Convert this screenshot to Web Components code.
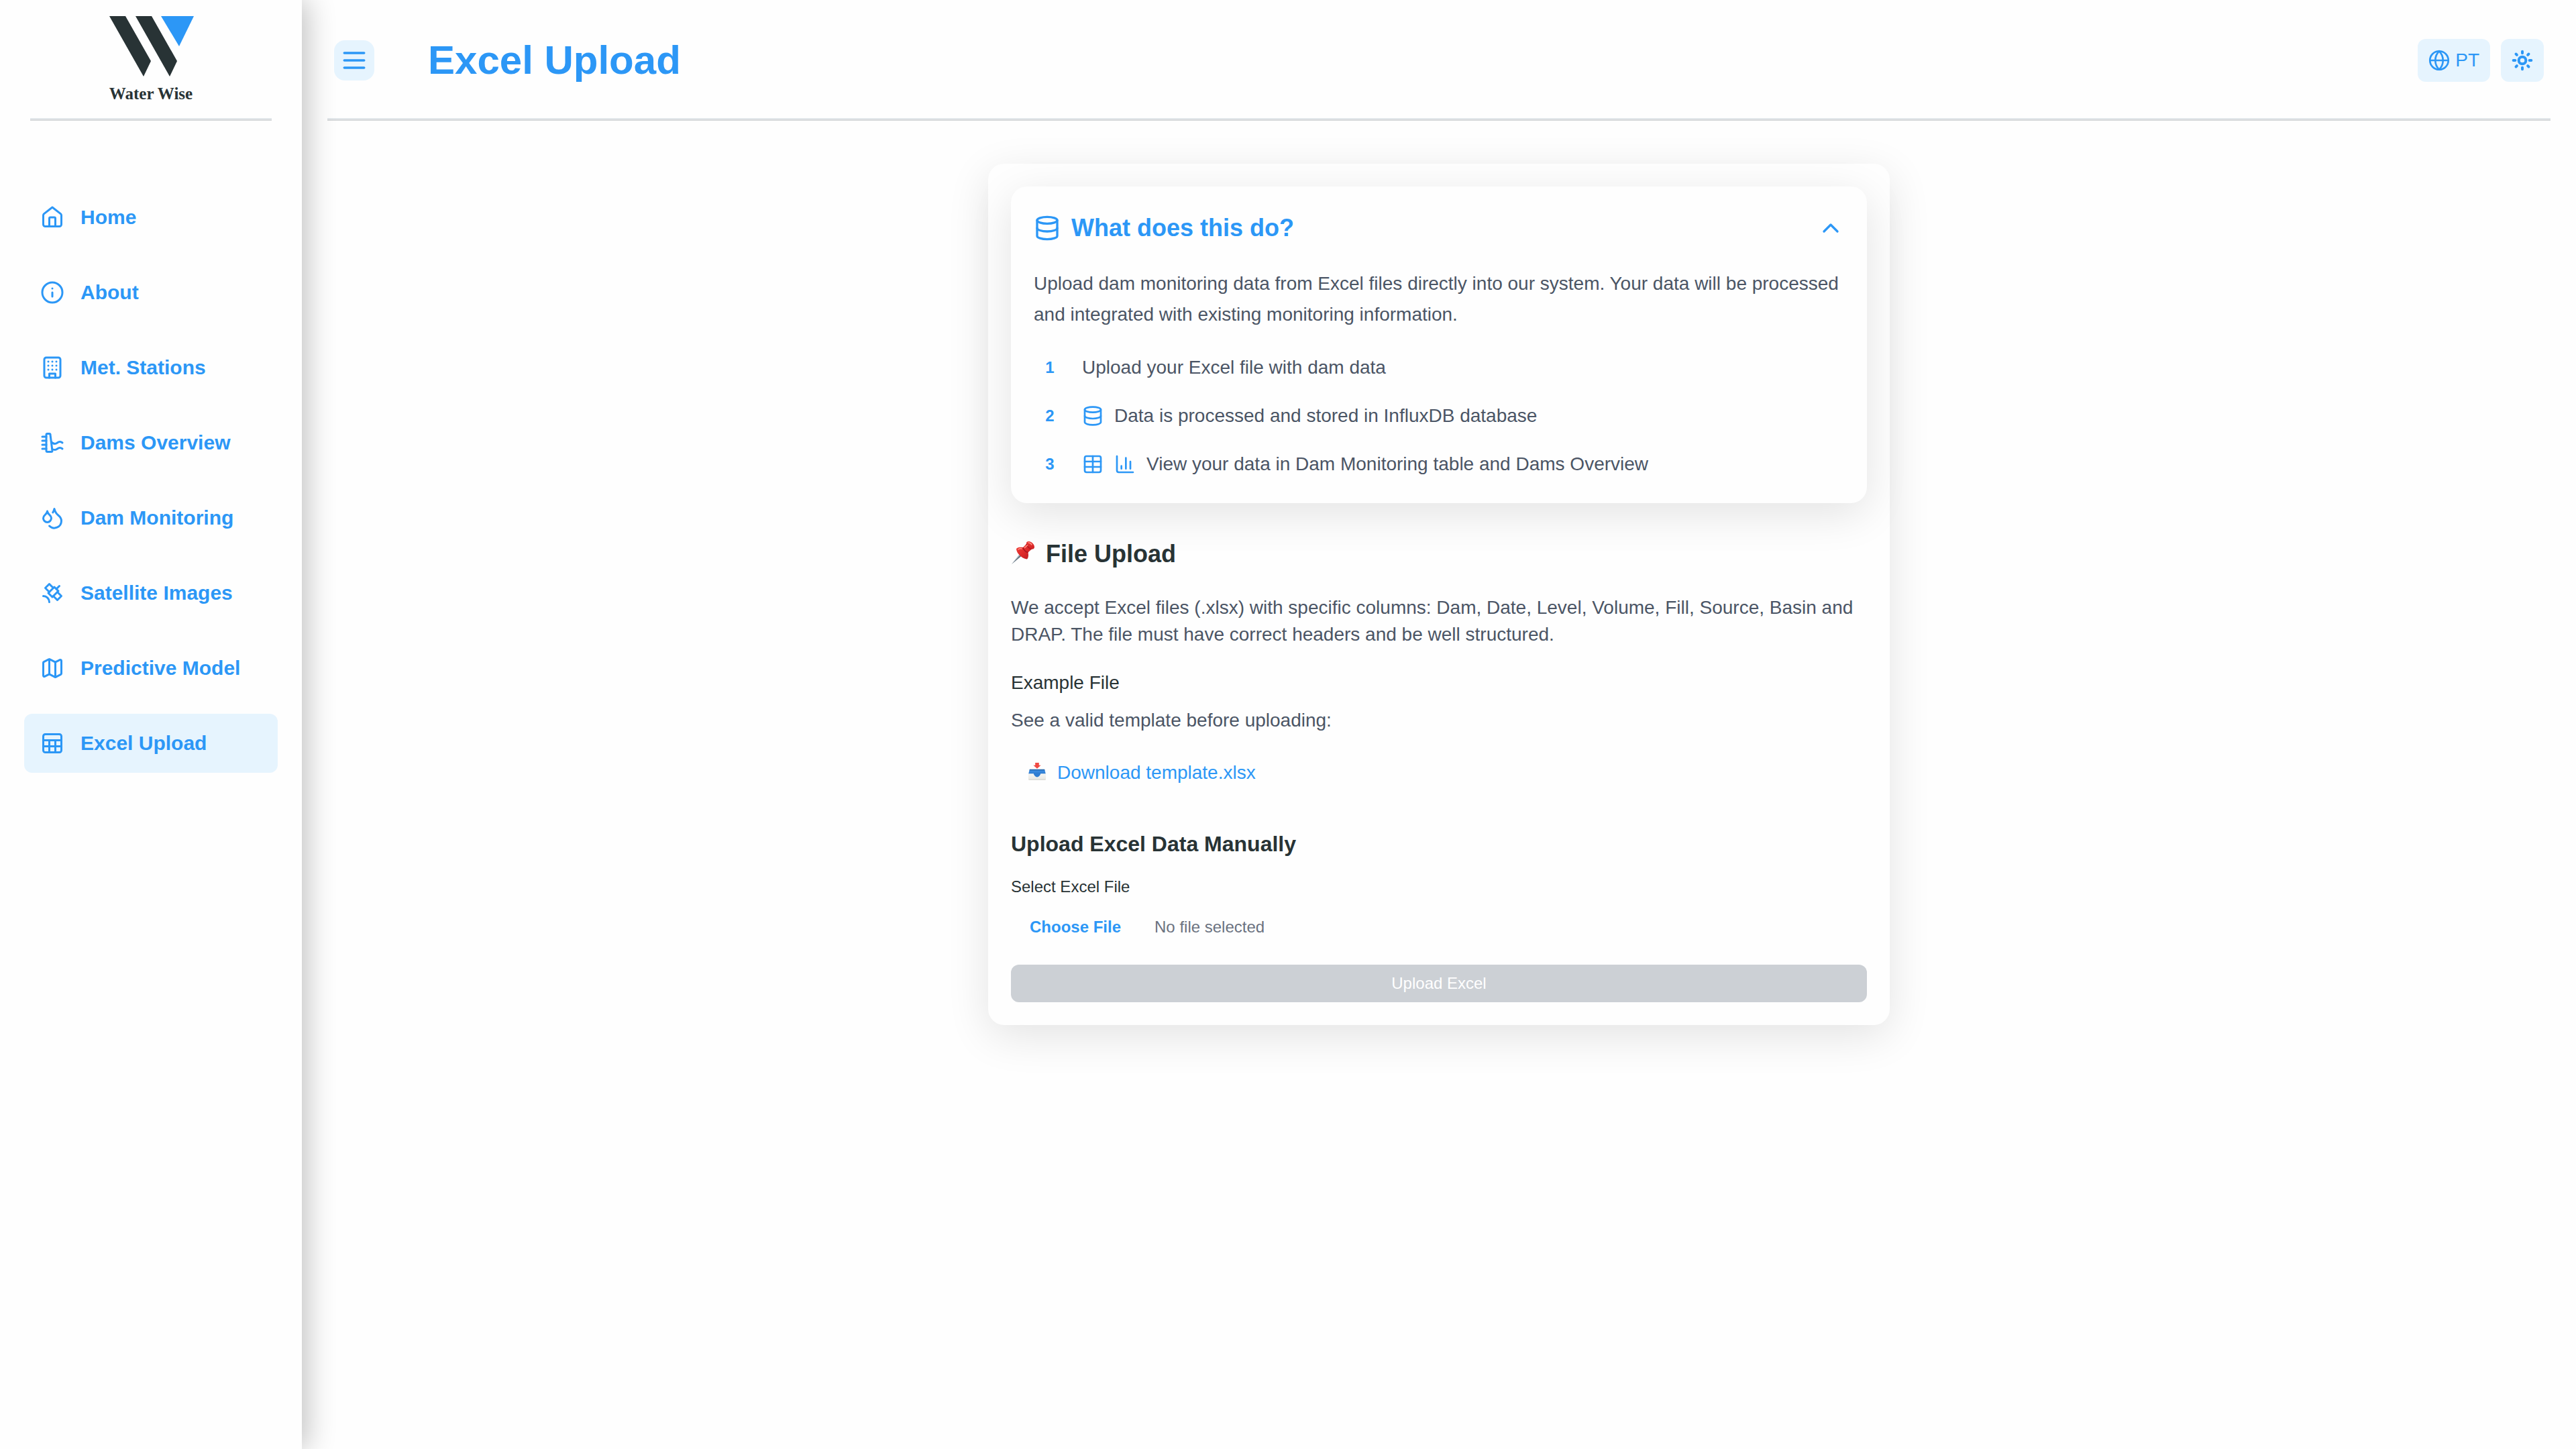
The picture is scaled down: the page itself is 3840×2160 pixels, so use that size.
<!DOCTYPE html>
<html lang="en">
<head>
<meta charset="utf-8">
<meta name="viewport" content="width=device-width, initial-scale=1">
<title>Water Wise - Excel Upload</title>
<style>
  :root {
    --primary: #2c97f6;
    --primary-soft: #e6f4fe;
    --ink: #283335;
    --body: #4b5565;
    --muted: #6b7280;
    --surface: #fefefe;
    --rule-top: #e2e7ea;
    --rule-bottom: #d6d8da;
    --card-shadow: 0 16px 64px rgba(0, 0, 0, .11);
  }
  body {
    margin: 0;
    background: var(--surface);
    color: var(--ink);
    font-family: "Liberation Sans", Arial, Helvetica, sans-serif;
    font-size: 28px;
    line-height: 40px;
  }
</style>
</head>
<body>
<ww-app>
  <ww-sidebar slot="sidebar">
    <ww-nav-link icon="house" href="#home">Home</ww-nav-link>
    <ww-nav-link icon="info" href="#about">About</ww-nav-link>
    <ww-nav-link icon="building" href="#stations">Met. Stations</ww-nav-link>
    <ww-nav-link icon="dam" href="#dams">Dams Overview</ww-nav-link>
    <ww-nav-link icon="droplets" href="#monitoring">Dam Monitoring</ww-nav-link>
    <ww-nav-link icon="satellite" href="#satellite">Satellite Images</ww-nav-link>
    <ww-nav-link icon="map" href="#model">Predictive Model</ww-nav-link>
    <ww-nav-link icon="sheet" href="#upload" active>Excel Upload</ww-nav-link>
  </ww-sidebar>
  <ww-header slot="header">Excel Upload</ww-header>
  <ww-card>
    <ww-info-card>
      <span slot="title">What does this do?</span>
      <span slot="intro">Upload dam monitoring data from Excel files directly into our system. Your data will be processed and integrated with existing monitoring information.</span>
      <ww-step number="1">Upload your Excel file with dam data</ww-step>
      <ww-step number="2" icons="database">Data is processed and stored in InfluxDB database</ww-step>
      <ww-step number="3" icons="table chart">View your data in Dam Monitoring table and Dams Overview</ww-step>
    </ww-info-card>
    <ww-file-guide></ww-file-guide>
    <ww-upload-form></ww-upload-form>
  </ww-card>
</ww-app>

<script>
const ICONS = {
  house: '<path d="M15 21v-8a1 1 0 0 0-1-1h-4a1 1 0 0 0-1 1v8"/><path d="M3 10a2 2 0 0 1 .6-1.4L12 2l8.4 6.6A2 2 0 0 1 21 10v9a2 2 0 0 1-2 2H5a2 2 0 0 1-2-2z"/>',
  info: '<circle cx="12" cy="12" r="10"/><path d="M12 16v-4"/><path d="M12 8h.01"/>',
  building: '<rect width="16" height="20" x="4" y="2" rx="2"/><path d="M9 22v-4h6v4"/><path d="M8 6h.01M16 6h.01M12 6h.01M12 10h.01M12 14h.01M16 10h.01M16 14h.01M8 10h.01M8 14h.01"/>',
  dam: '<path d="M11 11.31c1.17.56 1.54 1.69 3.5 1.69 2.5 0 2.5-2 5-2 1.3 0 1.9.5 2.5 1"/><path d="M11.75 18c.35.5 1.45 1 2.75 1 2.5 0 2.5-2 5-2 1.3 0 1.9.5 2.5 1"/><path d="M2 10h4M2 14h4M2 18h4M2 6h4"/><path d="M7 3a1 1 0 0 0-1 1v16a1 1 0 0 0 1 1h4a1 1 0 0 0 1-1L10 4a1 1 0 0 0-1-1z"/>',
  droplets: '<path d="M7 16.3c2.2 0 4-1.83 4-4.05 0-1.16-.57-2.26-1.71-3.19S7.29 6.75 7 5.3c-.29 1.45-1.14 2.84-2.29 3.76S3 11.1 3 12.25c0 2.22 1.8 4.05 4 4.05z"/><path d="M12.56 6.6A10.97 10.97 0 0 0 14 3.02c.5 2.5 2 4.9 4 6.5s3 3.5 3 5.5a6.98 6.98 0 0 1-11.91 4.97"/>',
  satellite: '<path d="M13 7 9 3 5 7l4 4"/><path d="m17 11 4 4-4 4-4-4"/><path d="m8 12 4 4 6-6-4-4Z"/><path d="m16 8 3-3"/><path d="M9 21a6 6 0 0 0-6-6"/>',
  map: '<path d="M14.106 5.553a2 2 0 0 0 1.788 0l3.659-1.83A1 1 0 0 1 21 4.619v12.764a1 1 0 0 1-.553.894l-4.553 2.277a2 2 0 0 1-1.788 0l-4.212-2.106a2 2 0 0 0-1.788 0l-3.659 1.83A1 1 0 0 1 3 19.381V6.618a1 1 0 0 1 .553-.894l4.553-2.277a2 2 0 0 1 1.788 0z"/><path d="M15 5.764v15"/><path d="M9 3.236v15"/>',
  sheet: '<rect width="18" height="18" x="3" y="3" rx="2"/><path d="M3 9h18M3 15h18M9 9v12M15 9v12"/>',
  menu: '<path d="M4 6h16M4 12h16M4 18h16"/>',
  globe: '<circle cx="12" cy="12" r="10.3"/><path d="M12 1.7a14.5 14.5 0 0 0 0 20.6 14.5 14.5 0 0 0 0-20.6"/><path d="M2 12h20"/>',
  sun: '<g stroke-width="3"><circle cx="12" cy="12" r="4"/><path d="M12 2v2M12 20v2M4.9 4.9l1 1M18.1 18.1l1 1M2 12h2M20 12h2M5.9 18.1l-1 1M19.1 4.9l-1 1"/></g>',
  database: '<ellipse cx="12" cy="5" rx="9" ry="3"/><path d="M3 5v14a9 3 0 0 0 18 0V5"/><path d="M3 12a9 3 0 0 0 18 0"/>',
  table: '<rect width="18" height="18" x="3" y="3" rx="2"/><path d="M12 3v18M3 9h18M3 15h18"/>',
  chart: '<path d="M3 3v16a2 2 0 0 0 2 2h16"/><path d="M18 17V9M13 17V5M8 17v-3"/>',
  chevron: '<path d="m18 15-6-6-6 6"/>'
};

function define(name, render) {
  customElements.define(name, class extends HTMLElement {
    connectedCallback() {
      if (this.shadowRoot) return;
      const template = document.createElement('template');
      template.innerHTML = '<style>*{box-sizing:border-box}</style>' + render(this);
      this.attachShadow({ mode: 'open' }).append(template.content.cloneNode(true));
    }
  });
}

/* Stroke icon; --size sets its edge. */
define('ww-icon', el => `
  <style>
    :host { display: block; flex: none; width: var(--size, 36px); height: var(--size, 36px); }
    svg { display: block; width: 100%; height: 100%; fill: none; stroke: currentColor; stroke-width: 2; stroke-linecap: round; stroke-linejoin: round; }
  </style>
  <svg viewBox="0 0 24 24" aria-hidden="true">${ICONS[el.getAttribute('name')]}</svg>`);

define('ww-rule', () => `
  <style>
    :host { display: block; height: 4px; border-top: 2px solid var(--rule-top); background: var(--rule-bottom); }
  </style>`);

define('ww-app', () => `
  <style>
    :host { display: flex; min-height: 100vh; }
    .page { flex: 1; min-width: 0; display: flex; flex-direction: column; }
    main { padding: 64px 48px; }
  </style>
  <slot name="sidebar"></slot>
  <div class="page">
    <slot name="header"></slot>
    <main><slot></slot></main>
  </div>`);

define('ww-logo', () => `
  <style>
    :host { display: flex; flex-direction: column; align-items: center; gap: 12px; color: var(--ink); }
    svg { display: block; width: 128px; height: 90px; }
    span { font: bold 25px/28px "Liberation Serif", "Times New Roman", serif; }
  </style>
  <svg viewBox="-2 0 128 90" aria-hidden="true">
    <path fill="currentColor" d="M0 0H24L62 67 51 90ZM39 0H63L101 67 90 90Z"/>
    <path fill="var(--primary)" d="M77 0H126L104 45Z"/>
  </svg>
  <span>Water Wise</span>`);

define('ww-sidebar', () => `
  <style>
    :host { display: block; flex: none; width: 450px; background: var(--surface); box-shadow: 8px 0 40px rgba(0, 0, 0, .24); z-index: 1; }
    ww-logo { height: 176px; padding-top: 24px; }
    ww-rule { margin: 0 10%; }
    nav { display: flex; flex-direction: column; gap: 24px; padding: 100px 36px 0; }
  </style>
  <ww-logo></ww-logo>
  <ww-rule></ww-rule>
  <nav aria-label="Main"><slot></slot></nav>`);

define('ww-nav-link', el => `
  <style>
    :host { display: block; }
    a { display: flex; align-items: center; gap: 24px; height: 88px; padding: 0 24px; border-radius: 12px; color: var(--primary); font-weight: bold; font-size: 30px; text-decoration: none; }
    :host([active]) a { background: var(--primary-soft); }
  </style>
  <a href="${el.getAttribute('href')}"${el.hasAttribute('active') ? ' aria-current="page"' : ''}>
    <ww-icon name="${el.getAttribute('icon')}"></ww-icon>
    <span><slot></slot></span>
  </a>`);

define('ww-header', () => `
  <style>
    :host { display: block; }
    .bar { display: flex; align-items: center; height: 176px; padding: 4px 48px 0; position: relative; z-index: 2; }
    h1 { margin: 0 0 0 80px; flex: 1; font-size: 60px; line-height: 72px; color: var(--primary); }
    button { display: flex; align-items: center; justify-content: center; border: 0; background: var(--primary-soft); color: var(--primary); font: inherit; }
    .menu { width: 60px; height: 60px; padding: 0; border-radius: 16px; --size: 44px; }
    .tools { display: flex; gap: 16px; --size: 32px; }
    .tools button { height: 64px; padding: 0 16px; gap: 8px; border-radius: 12px; }
    ww-rule { margin: 0 38px; }
  </style>
  <header class="bar">
    <button class="menu" type="button" aria-label="Toggle menu"><ww-icon name="menu"></ww-icon></button>
    <h1><slot></slot></h1>
    <div class="tools">
      <button type="button"><ww-icon name="globe"></ww-icon>PT</button>
      <button type="button" aria-label="Toggle theme"><ww-icon name="sun"></ww-icon></button>
    </div>
  </header>
  <ww-rule></ww-rule>`);

define('ww-card', () => `
  <style>
    :host { display: flex; flex-direction: column; gap: 48px; box-sizing: border-box; max-width: 1344px; margin: 0 auto; padding: 34px; border-radius: 24px; background: var(--surface); box-shadow: var(--card-shadow); }
  </style>
  <slot></slot>`);

define('ww-info-card', () => `
  <style>
    :host { display: block; padding: 34px; border-radius: 24px; background: var(--surface); box-shadow: var(--card-shadow); }
    button { display: flex; align-items: center; gap: 16px; width: 100%; height: 56px; padding: 0; border: 0; background: none; color: var(--primary); font: bold 36px/40px "Liberation Sans", Arial, sans-serif; text-align: left; --size: 40px; }
    .title { flex: 1; }
    p { margin: 32px 0; line-height: 46px; color: var(--body); }
    .steps { display: flex; flex-direction: column; gap: 24px; }
  </style>
  <button type="button" aria-expanded="true">
    <ww-icon name="database"></ww-icon>
    <span class="title"><slot name="title"></slot></span>
    <ww-icon name="chevron"></ww-icon>
  </button>
  <p><slot name="intro"></slot></p>
  <div class="steps" role="list"><slot></slot></div>`);

define('ww-step', el => `
  <style>
    :host { display: flex; align-items: center; gap: 16px; height: 48px; color: var(--body); --size: 32px; }
    b { width: 48px; margin-right: 8px; text-align: center; font-size: 24px; color: var(--primary); }
    ww-icon { color: var(--primary); }
  </style>
  <b>${el.getAttribute('number')}</b>
  ${(el.getAttribute('icons') || '').split(' ').filter(Boolean).map(n => `<ww-icon name="${n}"></ww-icon>`).join('')}
  <span><slot></slot></span>`);

define('ww-file-guide', () => `
  <style>
    :host { display: flex; flex-direction: column; align-items: flex-start; }
    h2 { display: flex; align-items: center; gap: 16px; margin: 0 0 32px; font-size: 36px; line-height: 56px; }
    h2 svg { display: block; width: 36px; height: 36px; margin-bottom: 4px; }
    h3 { margin: 0 0 16px; font-size: 28px; font-weight: normal; }
    p { margin: 0; color: var(--body); }
    .accept { margin-bottom: 32px; }
    a { display: flex; align-items: center; gap: 16px; margin-top: 24px; padding: 14px 25px; color: var(--primary); text-decoration: none; }
    a svg { display: block; width: 28px; height: 28px; margin-bottom: 4px; }
  </style>
  <h2>
    <svg viewBox="0 0 36 36" aria-hidden="true">
      <defs>
        <linearGradient id="pin-red" x1="0" y1="0" x2="1" y2="1"><stop offset="0" stop-color="#f4453f"/><stop offset=".55" stop-color="#dc2727"/><stop offset="1" stop-color="#a81820"/></linearGradient>
      </defs>
      <path d="M1 35 14 18.500 17 21.500Z" fill="#a9b4bd"/>
      <path d="M1 35 15.500 20 17 21.500Z" fill="#596b78"/>
      <path d="M8 12C10 9.500 14 9.500 18 10L23 5C22.500 2.500 24 1 26.500 1 31 1.500 35 5.500 35 9.500 35 12 33 13 31 12.500L25.500 17.500C26.500 21.500 26 25.500 24 27.500 17.500 27.500 8 19 8 12Z" fill="url(#pin-red)"/>
      <path d="M18 10C18.500 13.500 22 17 25.500 17.500" fill="none" stroke="#a9151d" stroke-width="1.500"/>
      <path d="M23 5C24 8.500 27.500 12 31 12.500" fill="none" stroke="#b11a20" stroke-width="1.500"/>
      <path d="M20.500 10.500 24.500 6.800M11 13c1.500-1.200 3.500-1.300 5-1M26 3c2 0 4 1.500 5 3" fill="none" stroke="#ff9184" stroke-width="1.500" stroke-linecap="round"/>
    </svg>
    File Upload
  </h2>
  <p class="accept">We accept Excel files (.xlsx) with specific columns: Dam, Date, Level, Volume, Fill, Source, Basin and DRAP. The file must have correct headers and be well structured.</p>
  <h3>Example File</h3>
  <p>See a valid template before uploading:</p>
  <a href="#template.xlsx">
    <svg viewBox="0 0 30 30" aria-hidden="true">
      <defs>
        <linearGradient id="tray-blue" x1="0" y1="0" x2="0" y2="1"><stop offset="0" stop-color="#1f5f9f"/><stop offset=".35" stop-color="#3b8be0"/><stop offset="1" stop-color="#2a75c8"/></linearGradient>
        <linearGradient id="tray-white" x1="0" y1="0" x2="0" y2="1"><stop offset="0" stop-color="#f6f6f3"/><stop offset="1" stop-color="#e8e7e2"/></linearGradient>
      </defs>
      <path d="M3 11.500H27L29 20H1Z" fill="url(#tray-blue)"/>
      <path d="M1 18.500H9.500C10.500 22 12.500 24 15 24S19.500 22 20.500 18.500H29V27a1.500 1.500 0 0 1-1.500 1.500h-25A1.500 1.500 0 0 1 1 27Z" fill="url(#tray-white)"/>
      <path d="M9.500 18.500C10.500 22 12.500 24 15 24S19.500 22 20.500 18.500Z" fill="#2f7dd2"/>
      <path d="M1.500 28H28.500" stroke="#cfcec9" stroke-width="1"/>
      <path d="M12 1h6v4h3l-6 5.500L9 5h3Z" fill="#f04a43"/>
    </svg>
    Download template.xlsx
  </a>`);

define('ww-upload-form', () => `
  <style>
    :host { display: block; }
    form { display: flex; flex-direction: column; }
    h2 { margin: 0 0 24px; font-size: 32px; line-height: 48px; }
    label { font-size: 24px; line-height: 32px; }
    .picker { display: flex; align-items: center; gap: 22px; height: 56px; margin: 16px 0 28px; position: relative; }
    .picker label { padding: 0 28px; font-weight: bold; color: var(--primary); }
    .picker span { font-size: 24px; color: var(--muted); }
    input { position: absolute; width: 1px; height: 1px; opacity: 0; overflow: hidden; }
    button { height: 56px; border: 0; border-radius: 12px; background: #ccd0d5; color: #fff; font: inherit; font-size: 24px; }
  </style>
  <form>
    <h2>Upload Excel Data Manually</h2>
    <label for="file">Select Excel File</label>
    <div class="picker">
      <input id="file" type="file" accept=".xlsx">
      <label for="file">Choose File</label>
      <span>No file selected</span>
    </div>
    <button type="submit" disabled>Upload Excel</button>
  </form>`);
</script>
</body>
</html>
